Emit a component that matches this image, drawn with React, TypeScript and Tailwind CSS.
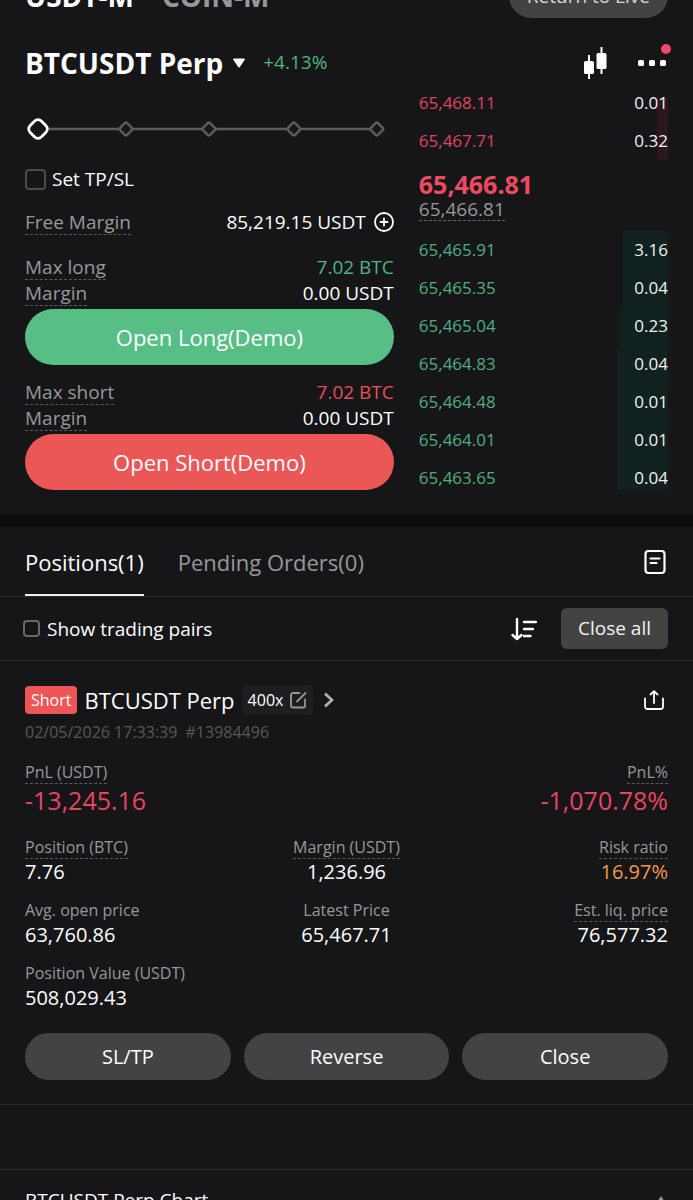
import { useState } from "react";
import clsx from "clsx";

type Order = { price: string; size: string; depth: number };

const asks: Order[] = [
  { price: "65,468.11", size: "0.01", depth: 8 },
  { price: "65,467.71", size: "0.32", depth: 8 },
];

const bids: Order[] = [
  { price: "65,465.91", size: "3.16", depth: 32 },
  { price: "65,465.35", size: "0.04", depth: 32 },
  { price: "65,465.04", size: "0.23", depth: 34 },
  { price: "65,464.83", size: "0.04", depth: 36 },
  { price: "65,464.48", size: "0.01", depth: 36 },
  { price: "65,464.01", size: "0.01", depth: 36 },
  { price: "65,463.65", size: "0.04", depth: 36 },
];

const metrics = [
  { label: "Position (BTC)", value: "7.76", hint: true },
  { label: "Margin (USDT)", value: "1,236.96", hint: true },
  { label: "Risk ratio", value: "16.97%", hint: true, warn: true },
  { label: "Avg. open price", value: "63,760.86" },
  { label: "Latest Price", value: "65,467.71" },
  { label: "Est. liq. price", value: "76,577.32", hint: true },
  { label: "Position Value (USDT)", value: "508,029.43" },
];

function OrderTable({ label, orders, side }: { label: string; orders: Order[]; side: "ask" | "bid" }) {
  const bar = side === "ask" ? "#2b171f" : "#11211f";
  return (
    <table aria-label={label} className="w-full shrink-0 table-fixed text-[17px] leading-6">
      <tbody>
        {orders.map((order) => (
          <tr key={order.price} className="h-[38px]">
            <td className={clsx("w-[43%] p-0", side === "ask" ? "text-[#e0435f]" : "text-[#4eae7f]")}>
              {order.price}
            </td>
            <td
              className="p-0 text-right text-[#f2f2f2]"
              style={{ background: `linear-gradient(to left, ${bar} ${order.depth}%, transparent ${order.depth}%)` }}
            >
              {order.size}
            </td>
          </tr>
        ))}
      </tbody>
    </table>
  );
}

function InfoRow({ label, value, color }: { label: string; value: string; color: string }) {
  return (
    <div className="flex h-[26px] items-center justify-between">
      <span className="border-b border-dashed border-[#5a5a5c] text-[19px] leading-6 text-[#98989a]">{label}</span>
      <span className={clsx("text-[19px] leading-6", color)}>{value}</span>
    </div>
  );
}

function LeverageSlider() {
  const [value, setValue] = useState(0);
  return (
    <div className="relative mt-5 h-6">
      <svg viewBox="0 0 369 24" className="h-6 w-full" fill="none" aria-hidden="true">
        <path d="M22 12H352" stroke="#5b5b5d" strokeWidth="2.6" />
        {[101, 184, 269, 352].map((x) => (
          <rect
            key={x}
            x={x - 5}
            y="7"
            width="10"
            height="10"
            rx="2"
            transform={`rotate(45 ${x} 12)`}
            fill="#161618"
            stroke="#5b5b5d"
            strokeWidth="2.6"
          />
        ))}
        <rect x="5" y="4" width="16" height="16" rx="5" transform="rotate(45 13 12)" fill="#161618" stroke="#fff" strokeWidth="2.8" />
      </svg>
      <input
        type="range"
        min={0}
        max={100}
        step={25}
        value={value}
        onChange={(e) => setValue(Number(e.target.value))}
        aria-label="Order size"
        className="absolute inset-0 w-full cursor-pointer opacity-0"
      />
    </div>
  );
}

function OrderForm() {
  return (
    <div>
      <LeverageSlider />
      <label className="mt-[25px] flex h-[26px] items-center gap-1.5 text-[19px] leading-6 text-white">
        <input
          type="checkbox"
          className="h-[21px] w-[21px] appearance-none rounded border-2 border-[#4c4c4e] checked:bg-[#4c4c4e]"
        />
        Set TP/SL
      </label>
      <div className="mt-[17px] flex h-[26px] items-center justify-between text-[19px] leading-6">
        <span className="border-b border-dashed border-[#5a5a5c] text-[#98989a]">Free Margin</span>
        <span className="flex items-center gap-2 text-white">
          85,219.15 USDT
          <button type="button" aria-label="Add funds">
            <svg viewBox="0 0 20 20" className="h-5 w-5" fill="none" stroke="currentColor" strokeWidth="1.8" strokeLinecap="round">
              <circle cx="10" cy="10" r="9" />
              <path d="M10 6.5v7M6.5 10h7" />
            </svg>
          </button>
        </span>
      </div>
      <div className="mt-[19px]">
        <InfoRow label="Max long" value="7.02 BTC" color="text-[#4eb582]" />
        <InfoRow label="Margin" value="0.00 USDT" color="text-white" />
      </div>
      <button type="button" className="mt-[3px] h-14 w-full rounded-full bg-[#57bf86] text-[22px] leading-7 text-white">
        Open Long(Demo)
      </button>
      <div className="mt-[14px]">
        <InfoRow label="Max short" value="7.02 BTC" color="text-[#e25253]" />
        <InfoRow label="Margin" value="0.00 USDT" color="text-white" />
      </div>
      <button type="button" className="mt-[3px] h-14 w-full rounded-full bg-[#eb5757] text-[22px] leading-7 text-white">
        Open Short(Demo)
      </button>
    </div>
  );
}

function OrderBook() {
  return (
    <div className="max-h-[393px] overflow-hidden">
      <div className="flex h-[63px] flex-col justify-end overflow-hidden">
        <OrderTable label="Asks" orders={asks} side="ask" />
      </div>
      <div className="flex h-[71px] flex-col items-start pt-2.5">
        <span className="text-[25px] leading-7 font-bold text-[#ef4a63]">65,466.81</span>
        <span className="border-b border-dashed border-[#6a6a6c] text-[19px] leading-[22px] text-[#98989a]">65,466.81</span>
      </div>
      <OrderTable label="Bids" orders={bids} side="bid" />
    </div>
  );
}

function PositionCard() {
  return (
    <article className="border-b border-[#28282a] px-[25px] pt-[23px] pb-6">
      <div className="flex h-[31px] items-center">
        <span className="rounded-sm bg-[#ee5556] px-1.5 py-0.5 text-base text-white">Short</span>
        <h2 className="ml-[7px] text-[22px] leading-7 text-white">BTCUSDT Perp</h2>
        <button type="button" className="ml-[7px] flex items-center gap-1.5 rounded bg-[#1e1e21] px-1.5 py-[3px] text-base text-white">
          400x
          <svg viewBox="0 0 18 18" className="h-[18px] w-[18px]" fill="none" stroke="#98989a" strokeWidth="1.8" strokeLinecap="round" strokeLinejoin="round">
            <path d="M10.5 2H4a2 2 0 0 0-2 2v10.500a2 2 0 0 0 2 2h10a2 2 0 0 0 2-2V8.500" />
            <path d="M8 10.500l8.500-8.500" />
          </svg>
        </button>
        <button type="button" aria-label="Position details" className="ml-2.5 text-[#b4b4b6]">
          <svg viewBox="0 0 12 18" className="h-[18px] w-3" fill="none" stroke="currentColor" strokeWidth="2.6">
            <path d="M2 2.500l7 6.500-7 6.500" />
          </svg>
        </button>
        <button type="button" aria-label="Share" className="mr-1 ml-auto text-white">
          <svg viewBox="0 0 20 20" className="h-5 w-5" fill="none" stroke="currentColor" strokeWidth="1.8" strokeLinecap="round" strokeLinejoin="round">
            <path d="M1 8.500V16.500a2.500 2.500 0 0 0 2.500 2.500h13a2.500 2.500 0 0 0 2.500-2.500V8.500" />
            <path d="M10 13V1.500M6.500 4.500L10 1.200l3.500 3.300" />
          </svg>
        </button>
      </div>
      <p className="mt-[5px] text-base text-[#58585a]">
        02/05/2026 17:33:39 <span className="ml-1">#13984496</span>
      </p>
      <dl className="mt-[18px] flex justify-between text-[#e9455f]">
        <div>
          <dt className="text-base leading-5">
            <span className="border-b border-dashed border-[#5a5a5c] text-[#98989a]">PnL (USDT)</span>
          </dt>
          <dd className="mt-1 text-[25px] leading-7">-13,245.16</dd>
        </div>
        <div className="text-right">
          <dt className="text-base leading-5">
            <span className="border-b border-dashed border-[#5a5a5c] text-[#98989a]">PnL%</span>
          </dt>
          <dd className="mt-1 text-[25px] leading-7">-1,070.78%</dd>
        </div>
      </dl>
      <dl className="mt-[23px] grid grid-cols-3 gap-y-[15px]">
        {metrics.map((m, i) => (
          <div key={m.label} className={clsx(i % 3 === 1 && "text-center", i % 3 === 2 && "text-right")}>
            <dt className="text-base leading-5 text-[#98989a]">
              <span className={clsx(m.hint && "border-b border-dashed border-[#5a5a5c]")}>{m.label}</span>
            </dt>
            <dd className={clsx("mt-0.5 text-xl leading-[26px]", m.warn ? "text-[#f2994a]" : "text-white")}>{m.value}</dd>
          </div>
        ))}
      </dl>
      <div className="mt-[22px] grid grid-cols-3 gap-[13px]">
        {["SL/TP", "Reverse", "Close"].map((action) => (
          <button key={action} type="button" className="h-[47px] rounded-full bg-[#434344] text-xl text-white">
            {action}
          </button>
        ))}
      </div>
    </article>
  );
}

export default function App() {
  return (
    <main className="h-screen overflow-hidden bg-[#161618] font-['Open_Sans',sans-serif]">
      <header className="px-[25px]">
        <div className="flex h-[18px] items-end justify-between overflow-hidden">
          <nav className="mb-1 flex gap-7 text-[28px] leading-9 font-bold">
            <a href="#usdt" className="text-white">USDT-M</a>
            <a href="#coin" className="text-[#98989a]">COIN-M</a>
          </nav>
          <button type="button" className="h-11 shrink-0 rounded-full bg-[#434344] px-[18px] text-[19px] text-[#d8d8da]">
            Return to Live
          </button>
        </div>
        <div className="flex h-[79px] items-center pt-2.5">
          <h1 className="text-[28px] leading-9 font-bold text-white">BTCUSDT Perp</h1>
          <button type="button" aria-label="Switch pair" className="ml-2.5">
            <svg viewBox="0 0 12 10" className="h-2.5 w-3" fill="#fff">
              <path d="M1 .5h10a.8.8 0 0 1 .7 1.300L6.800 9a1 1 0 0 1-1.600 0L.3 1.800A.8.8 0 0 1 1 .5z" />
            </svg>
          </button>
          <span className="ml-[18px] text-[19px] text-[#4eb582]">+4.13%</span>
          <button type="button" aria-label="Chart" className="ml-auto">
            <svg viewBox="0 0 24 34" className="h-[34px] w-6" fill="#fff">
              <path d="M5 9h2v24H5zM17.500 1h2v27h-2z" />
              <rect x="1" y="15" width="10" height="13" rx="1.500" />
              <rect x="13.500" y="7" width="10" height="16" rx="1.500" />
            </svg>
          </button>
          <button type="button" aria-label="More" className="relative mr-px ml-[30px]">
            <svg viewBox="0 0 30 6" className="h-1.5 w-[30px]" fill="#fff">
              <rect x="1" width="6" height="6" rx="1.500" />
              <rect x="12" width="6" height="6" rx="1.500" />
              <rect x="23" width="6" height="6" rx="1.500" />
            </svg>
            <span className="absolute -top-4 -right-1 h-2.5 w-2.5 rounded-full bg-[#ef4a63]" />
          </button>
        </div>
      </header>

      <section className="grid grid-cols-[37fr_25fr] gap-x-[25px] px-[25px] pb-[25px]">
        <OrderForm />
        <OrderBook />
      </section>

      <div className="h-3 bg-[#0c0c0d]" />

      <section>
        <div className="flex h-[70px] items-stretch border-b border-[#28282a] px-[25px] text-[22px] leading-7">
          <button type="button" className="border-t-2 border-b-2 border-t-transparent border-b-[#eeeeee] text-white">
            Positions(1)
          </button>
          <button type="button" className="ml-[34px] text-[#98989a]">Pending Orders(0)</button>
          <button type="button" aria-label="Order history" className="mr-0.5 ml-auto text-white">
            <svg viewBox="0 0 22 26" className="h-[26px] w-[22px]" fill="none" stroke="currentColor" strokeWidth="2.200" strokeLinecap="round">
              <rect x="1.500" y="2" width="19" height="22" rx="3" />
              <path d="M6.500 9.500h9M6.500 14h6" />
            </svg>
          </button>
        </div>
        <div className="flex h-16 items-center border-b border-[#2e2e30] pr-[25px] pl-[23px]">
          <label className="flex items-center gap-[7px] text-[19px] leading-6 text-white">
            <input
              type="checkbox"
              className="h-[17px] w-[17px] appearance-none rounded-sm border-2 border-[#68686a] checked:bg-[#68686a]"
            />
            Show trading pairs
          </label>
          <button type="button" aria-label="Sort" className="ml-auto text-white">
            <svg viewBox="0 0 26 24" className="h-6 w-[26px]" fill="none" stroke="currentColor" strokeWidth="2.400" strokeLinecap="round" strokeLinejoin="round">
              <path d="M6 2v19M1.500 18L6 22l4.500-4" />
              <path d="M13 5h12M13 12h9M13 19h6.500" />
            </svg>
          </button>
          <button type="button" className="ml-6 h-[41px] rounded-md bg-[#434344] px-[17px] text-[19px] text-[#f2f2f2]">
            Close all
          </button>
        </div>
        <PositionCard />
      </section>

      <section className="mt-16 flex items-center justify-between border-t border-[#2e2e30] px-[25px] pt-4">
        <h2 className="text-[19px] leading-7 text-white">BTCUSDT Perp Chart</h2>
        <button type="button" aria-label="Expand chart" className="mr-0.5 text-[#98989a]">
          <svg viewBox="0 0 10 8" className="h-2 w-2.5" fill="currentColor">
            <path d="M5 0l5 8H0z" />
          </svg>
        </button>
      </section>
    </main>
  );
}
